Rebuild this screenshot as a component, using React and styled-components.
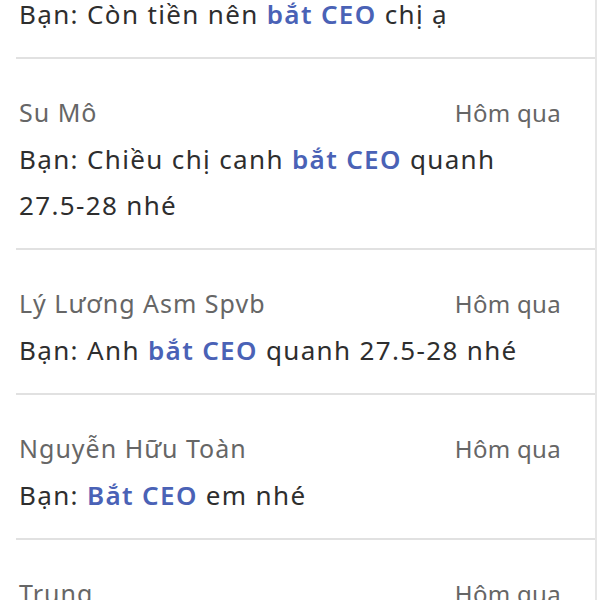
import styled, { createGlobalStyle } from 'styled-components';

const GlobalStyle = createGlobalStyle`
  html, body {
    margin: 0;
    padding: 0;
    background: #ffffff;
  }
  body {
    font-family: 'Noto Sans', 'Open Sans', sans-serif;
  }
`;

const Viewport = styled.div`
  width: 600px;
  height: 600px;
  overflow: hidden;
  background: #ffffff;
`;

const Panel = styled.div`
  width: 595px;
  height: 100%;
  border-right: 2px solid #e6e6e6;
  overflow: hidden;
`;

// the list is scrolled: the first result sits partly above the top edge
const List = styled.ul`
  list-style: none;
  margin: -41px 0 0 0;
  padding: 0;
`;

const Item = styled.li`
  margin-left: 16px;
  padding: 30px 34px 20px 3px;
  border-top: 2px solid #e1e1e1;

  &:first-child {
    border-top-color: transparent;
  }
`;

const Header = styled.div`
  display: flex;
  align-items: baseline;
  justify-content: space-between;
  line-height: 47px;
  color: #666666;
`;

const Name = styled.span`
  font-size: 25px;
  letter-spacing: 1px;
`;

const Time = styled.span`
  font-size: 24px;
  letter-spacing: 0.3px;
`;

const Message = styled.p`
  margin: 0;
  font-size: 26px;
  line-height: 46px;
  letter-spacing: 1.35px;
  color: #2e2e2e;
`;

const Highlight = styled.span`
  color: #4a62b6;
  font-weight: 600;
`;

const results = [
  { name: null, msg: ['Bạn: Còn tiền nên ', ['bắt CEO'], ' chị ạ'] },
  { name: 'Su Mô', time: 'Hôm qua', msg: ['Bạn: Chiều chị canh ', ['bắt CEO'], ' quanh 27.5-28 nhé'] },
  { name: 'Lý Lương Asm Spvb', time: 'Hôm qua', msg: ['Bạn: Anh ', ['bắt CEO'], ' quanh 27.5-28 nhé'] },
  { name: 'Nguyễn Hữu Toàn', time: 'Hôm qua', msg: ['Bạn: ', ['Bắt CEO'], ' em nhé'] },
  { name: 'Trung', time: 'Hôm qua', msg: ['Bạn: ', ['bắt CEO'], ' nhé'] },
];

export default function App() {
  return (
    <Viewport>
      <GlobalStyle />
      <Panel>
        <List>
          {results.map((r, i) => (
            <Item key={i}>
              {r.name && (
                <Header>
                  <Name>{r.name}</Name>
                  <Time>{r.time}</Time>
                </Header>
              )}
              <Message>
                {r.msg.map((part, j) =>
                  Array.isArray(part) ? <Highlight key={j}>{part[0]}</Highlight> : part
                )}
              </Message>
            </Item>
          ))}
        </List>
      </Panel>
    </Viewport>
  );
}
